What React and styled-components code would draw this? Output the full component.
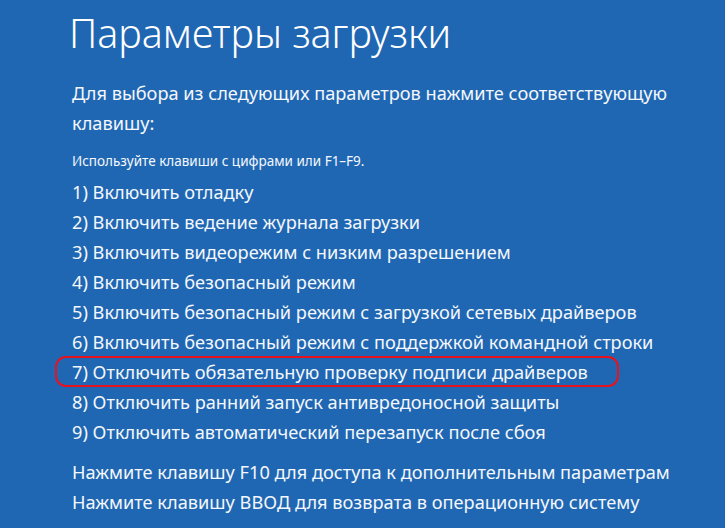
import React from "react";
import styled, { createGlobalStyle } from "styled-components";

const GlobalStyle = createGlobalStyle`
  html, body {
    margin: 0;
    padding: 0;
    background: #2067b3;
  }
`;

const items = [
  "1) Включить отладку",
  "2) Включить ведение журнала загрузки",
  "3) Включить видеорежим с низким разрешением",
  "4) Включить безопасный режим",
  "5) Включить безопасный режим с загрузкой сетевых драйверов",
  "6) Включить безопасный режим с поддержкой командной строки",
  "7) Отключить обязательную проверку подписи драйверов",
  "8) Отключить ранний запуск антивредоносной защиты",
  "9) Отключить автоматический перезапуск после сбоя",
];

const App = () => {
  return (
    <Screen>
      <GlobalStyle />
      <Title>Параметры загрузки</Title>
      <Intro>
        Для выбора из следующих параметров нажмите соответствующую клавишу:
      </Intro>
      <Hint>Используйте клавиши с цифрами или F1–F9.</Hint>
      <List>
        {items.map((text, i) => (
          <Item key={i} $marked={i === 6}>
            {text}
          </Item>
        ))}
      </List>
      <Footer>
        <FooterLine>Нажмите клавишу F10 для доступа к дополнительным параметрам</FooterLine>
        <FooterLine>Нажмите клавишу ВВОД для возврата в операционную систему</FooterLine>
      </Footer>
    </Screen>
  );
};

export default App;

const Screen = styled.div`
  width: 725px;
  height: 528px;
  box-sizing: border-box;
  padding: 4px 0 0 72px;
  background: #2067b3;
  color: #f4f7fb;
  font-family: "Noto Sans", "Open Sans", sans-serif;
  overflow: hidden;
`;

const Title = styled.h1`
  margin: 0 0 0 -3px;
  font-size: 39.5px;
  font-weight: 300;
  line-height: 58px;
  color: #ffffff;
`;

const Intro = styled.p`
  margin: 16px 0 0;
  width: 620px;
  font-size: 18.2px;
  line-height: 30px;
`;

const Hint = styled.div`
  margin-top: 13px;
  font-size: 13.5px;
  line-height: 20px;
`;

const List = styled.div`
  display: flex;
  flex-direction: column;
  margin-top: 5px;
`;

const Item = styled.div`
  font-size: 18.2px;
  line-height: 30px;
  height: 31px;
  margin-bottom: -1px;
  width: 564px;
  margin-left: -17px;
  padding-left: 15px;
  box-sizing: border-box;
  border: 2px solid ${(p) => (p.$marked ? "#e8121f" : "transparent")};
  border-radius: 11px;
  display: flex;
  align-items: center;
  white-space: nowrap;
`;

const Footer = styled.div`
  margin-top: 11px;
`;

const FooterLine = styled.div`
  font-size: 18.2px;
  line-height: 30px;
`;
